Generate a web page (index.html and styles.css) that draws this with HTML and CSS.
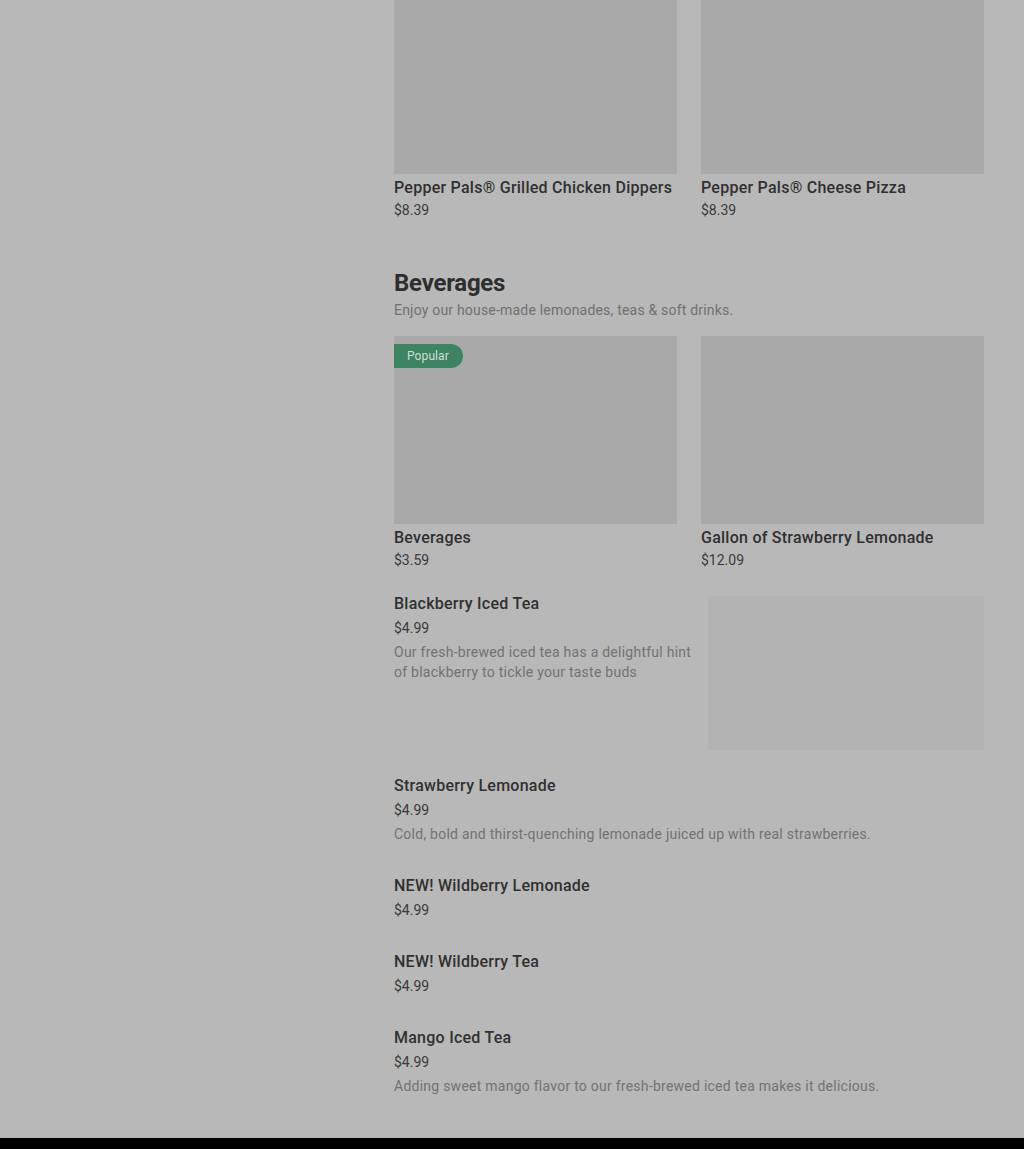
FILE: index.html
```html
<!DOCTYPE html>
<html lang="en">
<head>
    <meta charset="UTF-8">
    <title>Menu</title>
    <meta name="viewport" content="width=device-width, initial-scale=1">
    <link rel="stylesheet" href="styles.css">
</head>
<body>
    <div class="page">
        <div class="side"></div>
        <div class="main">
            <div class="card-grid">
                <div class="card">
                    <div class="card-img cut"></div>
                    <div class="item-name">Pepper Pals® Grilled Chicken Dippers</div>
                    <div class="price">$8.39</div>
                </div>
                <div class="card">
                    <div class="card-img cut"></div>
                    <div class="item-name">Pepper Pals® Cheese Pizza</div>
                    <div class="price">$8.39</div>
                </div>
            </div>

            <div class="section">
                <h2>Beverages</h2>
                <div class="section-desc">Enjoy our house-made lemonades, teas &amp; soft drinks.</div>

                <div class="card-grid">
                    <div class="card">
                        <div class="card-img">
                            <span class="badge">Popular</span>
                        </div>
                        <div class="item-name">Beverages</div>
                        <div class="price">$3.59</div>
                    </div>
                    <div class="card">
                        <div class="card-img"></div>
                        <div class="item-name">Gallon of Strawberry Lemonade</div>
                        <div class="price">$12.09</div>
                    </div>
                </div>

                <div class="row with-img">
                    <div class="row-text">
                        <div class="item-name">Blackberry Iced Tea</div>
                        <div class="price">$4.99</div>
                        <div class="desc">Our fresh-brewed iced tea has a delightful hint of blackberry to tickle your taste buds</div>
                    </div>
                    <div class="row-img"></div>
                </div>
                <div class="row">
                    <div class="row-text">
                        <div class="item-name">Strawberry Lemonade</div>
                        <div class="price">$4.99</div>
                        <div class="desc">Cold, bold and thirst-quenching lemonade juiced up with real strawberries.</div>
                    </div>
                </div>
                <div class="row">
                    <div class="row-text">
                        <div class="item-name">NEW! Wildberry Lemonade</div>
                        <div class="price">$4.99</div>
                    </div>
                </div>
                <div class="row">
                    <div class="row-text">
                        <div class="item-name">NEW! Wildberry Tea</div>
                        <div class="price">$4.99</div>
                    </div>
                </div>
                <div class="row">
                    <div class="row-text">
                        <div class="item-name">Mango Iced Tea</div>
                        <div class="price">$4.99</div>
                        <div class="desc">Adding sweet mango flavor to our fresh-brewed iced tea makes it delicious.</div>
                    </div>
                </div>
            </div>
        </div>
    </div>
    <div class="footer"></div>
</body>
</html>
```

FILE: styles.css
```css
body {
    margin: 0;
    padding: 0;
    background: #b8b8b8;
    font-family: Roboto, 'Liberation Sans', sans-serif;
    color: #2e2e2e;
}

.page {
    display: flex;
}

.side {
    flex: 0 0 394px;
}

.main {
    flex: 0 0 590px;
    padding-bottom: 26px;
}

/* grid of image cards */
.card-grid {
    display: grid;
    grid-template-columns: 1fr 1fr;
    column-gap: 24px;
}

.card-img {
    height: 188px;
    background: #a9a9a9;
    position: relative;
}

.card-img.cut {
    height: 174px;
}

.badge {
    position: absolute;
    top: 8px;
    left: 0;
    height: 24px;
    line-height: 24px;
    padding: 0 14px 0 13px;
    font-size: 12px;
    letter-spacing: 0.1px;
    color: #d3ddd7;
    background: #3d8462;
    border-radius: 0 12px 12px 0;
}

.item-name {
    font-size: 16px;
    font-weight: 500;
    line-height: 24px;
    letter-spacing: 0.25px;
    margin-top: 2px;
    color: #303030;
}

.price {
    font-size: 14px;
    line-height: 20px;
    color: #3a3a3a;
    margin-top: 0;
}

/* section header */
.section {
    margin-top: 48px;
}

h2 {
    margin: 0 0 2px 0;
    font-size: 24px;
    font-weight: 700;
    line-height: 30px;
    letter-spacing: -0.01em;
    color: #2e2e2e;
}

.section-desc {
    font-size: 14px;
    line-height: 20px;
    color: #707070;
    letter-spacing: 0.2px;
    margin-bottom: 16px;
}

/* list rows */
.section .card-grid {
    margin-bottom: 8px;
}

.row {
    display: flex;
    padding: 14px 0 16px 0;
}

.row .item-name {
    margin-top: 0;
}

.row .price {
    margin-top: 2px;
}

.row-text {
    flex: 1;
}

.desc {
    font-size: 14px;
    line-height: 20px;
    color: #727272;
    letter-spacing: 0.25px;
    margin-top: 4px;
}

.row.with-img .desc {
    padding-right: 10px;
}

.row.with-img {
    padding-bottom: 10px;
}

.row-img {
    flex: 0 0 276px;
    height: 154px;
    margin-top: 4px;
    margin-left: 6px;
    background: #b3b3b3;
    border-radius: 2px;
}

.footer {
    height: 11px;
    background: #000;
}
```
